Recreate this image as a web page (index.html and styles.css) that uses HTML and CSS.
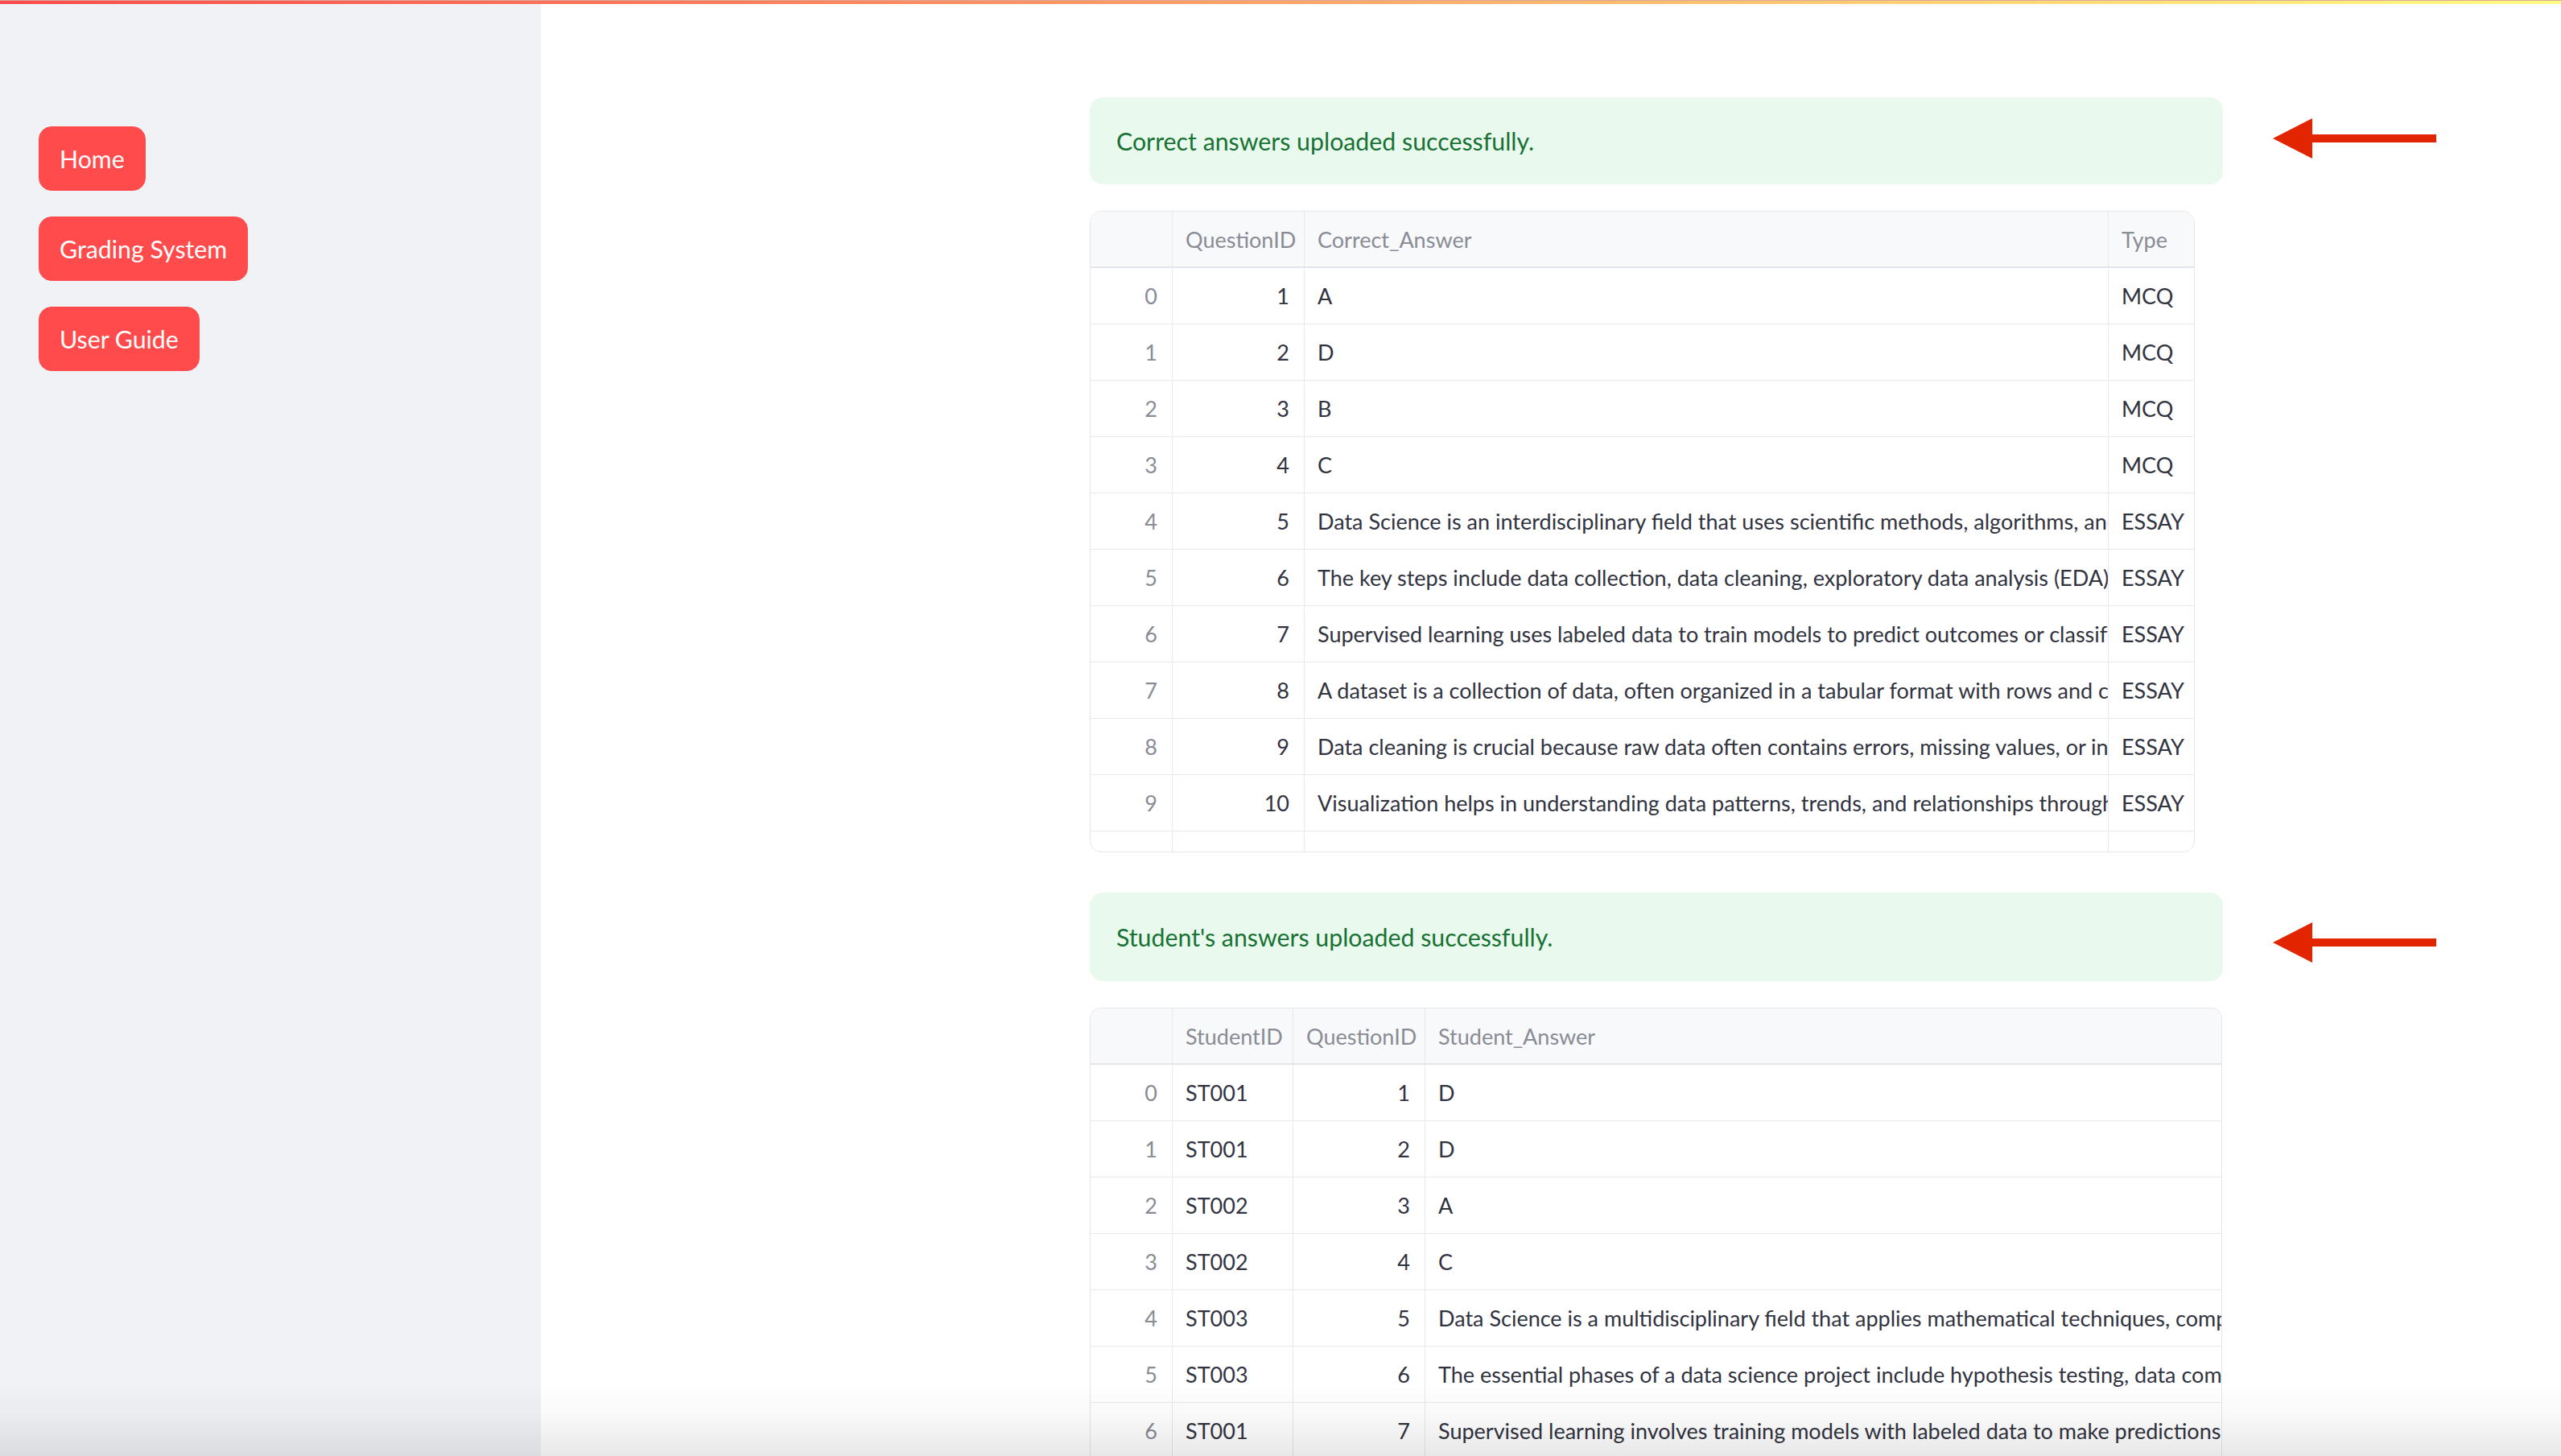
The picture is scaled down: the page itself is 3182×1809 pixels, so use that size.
FILE: index.html
```html
<!DOCTYPE html>
<html lang="en">
<head>
<meta charset="utf-8">
<title>Grading System</title>
<link rel="stylesheet" href="styles.css">
</head>
<body>
<div class="app">
  <div class="deco"></div>
  <div class="shell">
    <aside class="sidebar">
      <button class="nav-btn">Home</button>
      <button class="nav-btn">Grading System</button>
      <button class="nav-btn">User Guide</button>
    </aside>
    <main class="main">
      <div class="content">
        <div class="alert-wrap">
          <div class="alert alert-1">Correct answers uploaded successfully.</div>
          <svg class="arrow arrow-1" width="203" height="50" viewBox="0 0 203 50"><polygon points="0,25 49,0 49,20 203,20 203,30 49,30 49,50" fill="#e22400"/></svg>
        </div>
        <div class="grid grid-1">
          <table class="df">
            <colgroup><col class="c-idx"><col class="c-qid"><col class="c-ans1"><col class="c-type"></colgroup>
            <thead><tr><th></th><th>QuestionID</th><th>Correct_Answer</th><th class="last">Type</th></tr></thead>
            <tbody>
              <tr><td class="idx">0</td><td class="num">1</td><td>A</td><td class="last">MCQ</td></tr>
              <tr><td class="idx">1</td><td class="num">2</td><td>D</td><td class="last">MCQ</td></tr>
              <tr><td class="idx">2</td><td class="num">3</td><td>B</td><td class="last">MCQ</td></tr>
              <tr><td class="idx">3</td><td class="num">4</td><td>C</td><td class="last">MCQ</td></tr>
              <tr><td class="idx">4</td><td class="num">5</td><td>Data Science is an interdisciplinary field that uses scientific methods, algorithms, and systems to extract knowledge and insights from data.</td><td class="last">ESSAY</td></tr>
              <tr><td class="idx">5</td><td class="num">6</td><td>The key steps include data collection, data cleaning, exploratory data analysis (EDA), modeling, and evaluation.</td><td class="last">ESSAY</td></tr>
              <tr><td class="idx">6</td><td class="num">7</td><td>Supervised learning uses labeled data to train models to predict outcomes or classify data.</td><td class="last">ESSAY</td></tr>
              <tr><td class="idx">7</td><td class="num">8</td><td>A dataset is a collection of data, often organized in a tabular format with rows and columns.</td><td class="last">ESSAY</td></tr>
              <tr><td class="idx">8</td><td class="num">9</td><td>Data cleaning is crucial because raw data often contains errors, missing values, or inconsistencies.</td><td class="last">ESSAY</td></tr>
              <tr><td class="idx">9</td><td class="num">10</td><td>Visualization helps in understanding data patterns, trends, and relationships through charts and graphs.</td><td class="last">ESSAY</td></tr>
              <tr><td class="idx">10</td><td class="num">11</td><td>C</td><td class="last">MCQ</td></tr>
            </tbody>
          </table>
        </div>
        <div class="alert-wrap alert-wrap-2">
          <div class="alert alert-2">Student's answers uploaded successfully.</div>
          <svg class="arrow arrow-2" width="203" height="50" viewBox="0 0 203 50"><polygon points="0,25 49,0 49,20 203,20 203,30 49,30 49,50" fill="#e22400"/></svg>
        </div>
        <div class="grid grid-2">
          <table class="df">
            <colgroup><col class="c-idx"><col class="c-sid"><col class="c-qid"><col class="c-ans2"></colgroup>
            <thead><tr><th></th><th>StudentID</th><th>QuestionID</th><th class="last">Student_Answer</th></tr></thead>
            <tbody>
              <tr><td class="idx">0</td><td>ST001</td><td class="num">1</td><td class="last">D</td></tr>
              <tr><td class="idx">1</td><td>ST001</td><td class="num">2</td><td class="last">D</td></tr>
              <tr><td class="idx">2</td><td>ST002</td><td class="num">3</td><td class="last">A</td></tr>
              <tr><td class="idx">3</td><td>ST002</td><td class="num">4</td><td class="last">C</td></tr>
              <tr><td class="idx">4</td><td>ST003</td><td class="num">5</td><td class="last">Data Science is a multidisciplinary field that applies mathematical techniques, computational tools and domain knowledge.</td></tr>
              <tr><td class="idx">5</td><td>ST003</td><td class="num">6</td><td class="last">The essential phases of a data science project include hypothesis testing, data comparison and reporting.</td></tr>
              <tr><td class="idx">6</td><td>ST001</td><td class="num">7</td><td class="last">Supervised learning involves training models with labeled data to make predictions about new data.</td></tr>
            </tbody>
          </table>
        </div>
      </div>
    </main>
  </div>
  <div class="bottom-shade"></div>
</div>
</body>
</html>
```
FILE: styles.css
```css
* { box-sizing: border-box; }
html, body {
  margin: 0;
  padding: 0;
  height: 100%;
}
body {
  font-family: Lato, "Open Sans", sans-serif;
  color: #31333f;
  background: #ffffff;
  overflow: hidden;
}
.app {
  height: 100vh;
  display: flex;
  flex-direction: column;
  overflow: hidden;
}
.deco {
  height: 5px;
  flex: none;
  background: linear-gradient(90deg, #ff4b4b, #fffd80);
  border-top: 1px solid #d9a9a0;
}
.shell {
  flex: 1;
  display: flex;
  min-height: 0;
}
.sidebar {
  width: 672px;
  flex: none;
  background: #f0f2f6;
  padding: 152px 0 0 48px;
  display: flex;
  flex-direction: column;
  align-items: flex-start;
  gap: 32px;
}
.nav-btn {
  height: 80px;
  padding: 0 25px;
  border: 1px solid #ff4b4b;
  border-radius: 16px;
  background: #ff4b4b;
  color: #ffffff;
  font-family: Lato, sans-serif;
  font-size: 30.3px;
  line-height: 1;
  cursor: pointer;
}
.main {
  flex: 1;
  min-width: 0;
  padding: 116px 0 0 682px;
  overflow: hidden;
}
.content {
  width: 1408px;
  display: flex;
  flex-direction: column;
}
.alert-wrap {
  position: relative;
}
.alert-wrap-2 {
  margin-top: 50px;
}
.alert {
  height: 108px;
  border-radius: 16px;
  background: #e9f9ee;
  color: #177233;
  font-size: 30.3px;
  padding: 0 33px;
  display: flex;
  align-items: center;
}
.alert-2 {
  height: 110px;
}
.arrow {
  position: absolute;
  left: calc(100% + 62px);
  display: block;
}
.arrow-1 { top: 26px; }
.arrow-2 { top: 37px; }
.grid {
  margin-top: 33px;
  border: 1px solid #e6e7eb;
  border-radius: 14px;
  overflow: hidden;
  background: #ffffff;
}
.grid-1 {
  width: 1373px;
  height: 797px;
}
.grid-2 {
  width: 1407px;
  height: 600px;
  border-bottom: none;
  border-bottom-left-radius: 0;
  border-bottom-right-radius: 0;
}
.df {
  border-collapse: separate;
  border-spacing: 0;
  table-layout: fixed;
  width: 100%;
  font-size: 27px;
}
.c-idx { width: 102px; }
.c-qid { width: 164px; }
.c-sid { width: 150px; }
.c-ans1 { width: 999px; }
.c-type { width: 106px; }
.c-ans2 { width: auto; }
.df th, .df td {
  height: 70px;
  padding: 0 16px;
  white-space: nowrap;
  overflow: hidden;
  text-overflow: clip;
  border-right: 1px solid #e8e9ed;
  border-bottom: 1px solid #e8e9ed;
  text-align: left;
  font-weight: 400;
  vertical-align: middle;
}
.df th {
  background: #f8f9fb;
  color: #8a8c95;
  border-bottom: 2px solid #e4e5ea;
}
.df .last { border-right: none; }
.df td.idx {
  text-align: right;
  color: #8a8c95;
  padding-right: 18px;
}
.df td.num {
  text-align: right;
  padding-right: 18px;
}
.bottom-shade {
  position: fixed;
  left: 0;
  right: 0;
  bottom: 0;
  height: 90px;
  background: linear-gradient(180deg, rgba(0,0,0,0) 0%, rgba(0,0,0,0.03) 50%, rgba(0,0,0,0.09) 100%);
  pointer-events: none;
}
```
